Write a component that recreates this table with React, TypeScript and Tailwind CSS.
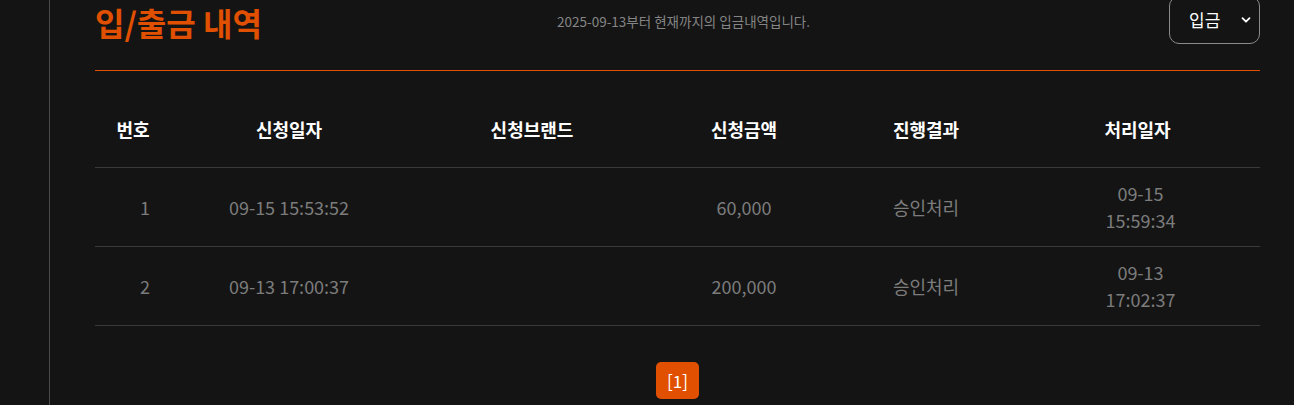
import React from 'react'

type Row = {
  no: number
  requestedAt: string
  brand: string
  amount: string
  result: string
  processedDate: string
  processedTime: string
}

const rows: Row[] = [
  {
    no: 1,
    requestedAt: '09-15 15:53:52',
    brand: '',
    amount: '60,000',
    result: '승인처리',
    processedDate: '09-15',
    processedTime: '15:59:34',
  },
  {
    no: 2,
    requestedAt: '09-13 17:00:37',
    brand: '',
    amount: '200,000',
    result: '승인처리',
    processedDate: '09-13',
    processedTime: '17:02:37',
  },
]

const cols = 'grid grid-cols-[76px_236px_250px_174px_190px_1fr]'

export default function App() {
  return (
    <div
      className="flex h-[405px] overflow-hidden bg-[#141414]"
      style={{ fontFamily: '"Noto Sans CJK KR", "Noto Sans", sans-serif' }}
    >
      <aside className="w-[50px] shrink-0 border-r border-[#4a4a4a]" />

      <main className="flex-1 pl-[45px] pr-[34px]">
        <div className="flex h-[71px] items-start border-b border-[#e05000]">
          <div className="flex-1 pt-[2px]">
            <h1 className="text-[32px] leading-[40px] font-bold text-[#e05000]">입/출금 내역</h1>
          </div>
          <p className="ml-3 pt-[11px] text-[13.5px] leading-[20px] text-[#858585]">
            2025-09-13부터 현재까지의 입금내역입니다.
          </p>
          <div className="flex flex-1 justify-end">
            <div className="-mt-1 flex h-[48px] w-[91px] items-center justify-between rounded-[10px] border border-[#8a8a8a] pr-[8px] pl-[19px]">
              <span className="text-[17px] text-white">입금</span>
              <svg width="10" height="10" viewBox="0 0 10 10" fill="none">
                <path d="M1.5 3.2 5 6.7 8.5 3.2" stroke="white" strokeWidth="1.8" strokeLinecap="round" strokeLinejoin="round" />
              </svg>
            </div>
          </div>
        </div>

        <div className="mt-5">
          <div className={`${cols} h-[77px] items-center border-b border-[#3a3a3a] text-center text-[18px] font-bold text-white`}>
            <div>번호</div>
            <div>신청일자</div>
            <div>신청브랜드</div>
            <div>신청금액</div>
            <div>진행결과</div>
            <div className="pr-[6px]">처리일자</div>
          </div>

          {rows.map((row) => (
            <div
              key={row.no}
              className={`${cols} h-[79px] items-center border-b border-[#3a3a3a] text-center text-[18px] leading-[27px] text-[#7c7c7c]`}
            >
              <div className="pl-6">{row.no}</div>
              <div>{row.requestedAt}</div>
              <div>{row.brand}</div>
              <div>{row.amount}</div>
              <div>{row.result}</div>
              <div className="flex flex-col items-center">
                <span>{row.processedDate}</span>
                <span>{row.processedTime}</span>
              </div>
            </div>
          ))}
        </div>

        <div className="mt-9 flex justify-center">
          <button className="flex h-[37px] w-[43px] items-center justify-center rounded-[5px] bg-[#e05000] text-[17px] text-white">
            [1]
          </button>
        </div>
      </main>
    </div>
  )
}
